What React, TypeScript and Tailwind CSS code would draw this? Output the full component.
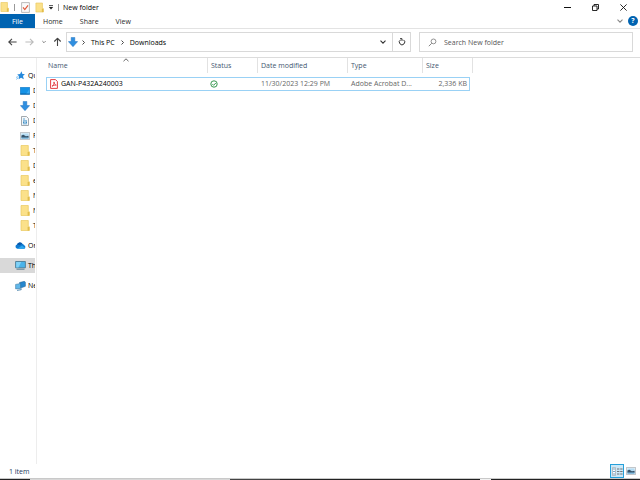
import React from 'react';

type IconProps = { className?: string };

const Folder = ({ className = 'w-[10px] h-[11px]' }: IconProps) => (
    <svg viewBox="0 0 10 11" className={`shrink-0 ${className}`}>
        <path d="M1 .5h7.300v6.200h1v3.800H1z" fill="#fbe18a" stroke="#e9c860" strokeWidth=".7" />
        <path d="M7.600 7h1.800v3.600H7.600z" fill="#e2bd4c" />
    </svg>
);

const DownArrow = () => (
    <svg viewBox="0 0 10 10" className="w-[10px] h-[10px] shrink-0">
        <path d="M3.2.4h3.6v4.2h2.8L5 9.7.4 4.6h2.8z" fill="#2f8fe0" stroke="#1f6fbf" strokeWidth=".5" />
    </svg>
);

const Star = () => (
    <svg viewBox="0 0 9 9" className="w-[9px] h-[9px] shrink-0">
        <path d="M5.400.2l1 2.800 2.500.1-1.900 1.900.8 3.200-2.700-1.500-2.500 1.600.5-3L1.200 3.500l2.900-.4z" fill="#2589dc" />
        <path d="M0 6.400l2.400-.8M.2 8.400l2.200-1.600" stroke="#64b2ee" strokeWidth=".8" />
    </svg>
);

const Desktop = () => (
    <svg viewBox="0 0 10 8" className="w-[10px] h-[8px] shrink-0">
        <path d="M.3.3h9.4v7H.3z" fill="#1592e6" stroke="#0a6fbd" strokeWidth=".6" />
        <path d="M6 7L9.4 2v5z" fill="#38aaf2" />
        <path d="M.3 7h9.4" stroke="#0b5a9b" strokeWidth=".8" />
    </svg>
);

const Document = () => (
    <svg viewBox="0 0 8 10" className="w-[8px] h-[10px] mx-px shrink-0">
        <path d="M.5.5h5l2 2v7h-7z" fill="#f5f8fa" stroke="#8d9499" strokeWidth=".8" />
        <path d="M2 3h2M2 4.8h4M2 7.8h4" stroke="#3e8fc7" strokeWidth=".8" />
        <path d="M2 5.5h1.5v1.6H2zM4.5 5.5H6v1.6H4.5z" fill="#3e8fc7" />
    </svg>
);

const Picture = () => (
    <svg viewBox="0 0 10 8" className="w-[10px] h-[8px] shrink-0">
        <path d="M.4.4h9.2v7.2H.4z" fill="#f2f6f8" stroke="#a3a9ad" strokeWidth=".7" />
        <path d="M1.4 1.4h7.2v5.2H1.4z" fill="#b4dcf4" />
        <path d="M1.4 3.6l2-.8 2.5 1.4 2.7-.4v2H1.4z" fill="#38546a" />
        <path d="M1.4 5.6h7.2v1H1.4z" fill="#5ba2cf" />
    </svg>
);

const Cloud = () => (
    <svg viewBox="0 0 11 7" className="w-[11px] h-[7px] shrink-0">
        <path d="M2.3 6.7A2.1 2.1 0 0 1 2 2.6 3 3 0 0 1 7.3 1.7 2.6 2.6 0 0 1 9 3.2a1.8 1.8 0 0 1 0 3.5z" fill="#0f7ad1" />
        <path d="M2.4 6.7L7 3.6l3.2 2.3a1.6 1.6 0 0 1-1.2.8z" fill="#2da6ee" />
        <path d="M2 2.6A3 3 0 0 1 7.3 1.7L4.6 3.2z" fill="#0a58a8" />
    </svg>
);

const Computer = () => (
    <svg viewBox="0 0 11 9" className="w-[11px] h-[9px] shrink-0">
        <path d="M.6.5h9.8v6.3H.6z" fill="#49b3ea" stroke="#38677f" strokeWidth=".7" />
        <path d="M1.2 1h5L3.4 6.4H1.2z" fill="#80d2f7" />
        <path d="M1.5 8.2h8" stroke="#4a7389" strokeWidth=".9" />
    </svg>
);

const Network = () => (
    <svg viewBox="0 0 11 10" className="w-[11px] h-[10px] shrink-0">
        <path d="M4.500 1.500l5-1.200.9 1v4L5.600 7z" fill="#2687cf" stroke="#1d5c8f" strokeWidth=".5" />
        <path d="M.6 3.400l5-.9v4.900l-5 .5z" fill="#61b8ea" stroke="#2e6c98" strokeWidth=".5" />
        <path d="M2 9.300l4.200-.6V7.500" stroke="#3d7ba6" strokeWidth=".9" fill="none" />
    </svg>
);

const Chevron = ({ className = 'w-[6px]' }: IconProps) => (
    <svg viewBox="0 0 6 4" className={`h-[4px] shrink-0 ${className}`}>
        <path d="M.5.6L3 3.1 5.500.6" fill="none" stroke="currentColor" strokeWidth="1.1" />
    </svg>
);

const Crumb = () => (
    <svg viewBox="0 0 3 5" className="w-[3px] h-[5px] shrink-0">
        <path d="M.5.5l2 2-2 2" fill="none" stroke="#333" strokeWidth=".9" />
    </svg>
);

const Arrow = ({ className = '' }: IconProps) => (
    <svg viewBox="0 0 9 8" className={`w-[9px] h-[8px] shrink-0 ${className}`}>
        <path d="M4 .8L.8 4 4 7.2M.8 4h7.8" fill="none" stroke="currentColor" strokeWidth="1.1" />
    </svg>
);

const quickAccess = [
    { label: 'Desktop', icon: <Desktop /> },
    { label: 'Downloads', icon: <DownArrow /> },
    { label: 'Documents', icon: <Document /> },
    { label: 'Pictures', icon: <Picture /> },
    { label: 'T', icon: <Folder /> },
    { label: 'D', icon: <Folder /> },
    { label: 'e', icon: <Folder /> },
    { label: 'N', icon: <Folder /> },
    { label: 'N', icon: <Folder /> },
    { label: 'T', icon: <Folder /> },
];

const places = [
    { label: 'OneDrive', icon: <Cloud />, active: false },
    { label: 'This PC', icon: <Computer />, active: true },
    { label: 'Network', icon: <Network />, active: false },
];

const TitleBar = () => (
    <header className="flex h-[14px] items-center text-black">
        <Folder className="w-[9px] h-[10px]" />
        <span className="ml-[5px] h-[7px] w-px bg-[#999]" />
        <button aria-label="Properties" className="ml-[6px]">
            <svg viewBox="0 0 9 11" className="w-[9px] h-[11px]">
                <path d="M.6.6h7.8v9.8H.6z" fill="#fafafa" stroke="#a9a9a9" strokeWidth=".8" />
                <path d="M2 5.4l1.8 2.2L7 3.4" fill="none" stroke="#e0593a" strokeWidth="1.2" />
            </svg>
        </button>
        <button aria-label="New folder" className="ml-[5px]"><Folder className="w-[9px] h-[11px]" /></button>
        <button aria-label="Customize toolbar" className="ml-[4px]">
            <svg viewBox="0 0 6 5" className="w-[6px] h-[5px]">
                <path d="M1 .6h4" stroke="#222" strokeWidth=".8" />
                <path d="M.8 2h4.4L3 4.4z" fill="#222" />
            </svg>
        </button>
        <span className="ml-[4px] h-[7px] w-px bg-[#999]" />
        <h1 className="ml-[4px] pt-px">New folder</h1>
        <div className="ml-auto flex items-center gap-[21px] pr-[13px]">
            <button aria-label="Minimize">
                <svg viewBox="0 0 7 7" className="w-[7px] h-[7px]"><path d="M0 3.5h7" stroke="#111" /></svg>
            </button>
            <button aria-label="Restore">
                <svg viewBox="0 0 7 7" className="w-[7px] h-[7px]">
                    <path d="M.5 2h4.5v4.5H.5zM2 2V.5h4.5V5H5" fill="none" stroke="#111" strokeWidth=".9" />
                </svg>
            </button>
            <button aria-label="Close">
                <svg viewBox="0 0 7 7" className="w-[7px] h-[7px]">
                    <path d="M.4.4l6.2 6.2M6.6.4L.4 6.6" stroke="#111" strokeWidth=".9" />
                </svg>
            </button>
        </div>
    </header>
);

const MenuBar = () => (
    <nav className="flex h-[15px] items-center border-b border-[#e3e3e3] text-[#2b2b2b]">
        <button className="h-full w-[35px] bg-[#0063b1] pt-px text-white">File</button>
        <button className="ml-[8px] pt-px">Home</button>
        <button className="ml-[17px] pt-px">Share</button>
        <button className="ml-[17px] pt-px">View</button>
        <button aria-label="Expand ribbon" className="ml-auto text-[#888]"><Chevron /></button>
        <button aria-label="Help" className="ml-[5px] mr-[2px] flex h-[10px] w-[10px] items-center justify-center rounded-full bg-[#0063b1] font-bold text-white">?</button>
    </nav>
);

const AddressBar = () => (
    <div className="flex h-[29px] items-center border-b border-[#dcdcdc] pl-[8px] pr-[7px] pb-[2px]">
        <button aria-label="Back"><Arrow className="text-[#444]" /></button>
        <button aria-label="Forward" className="ml-[8px]"><Arrow className="rotate-180 text-[#bbb]" /></button>
        <button aria-label="Recent locations" className="ml-[8px] text-[#555]"><Chevron className="w-[4px]" /></button>
        <button aria-label="Up" className="ml-[7px] mr-[4px]"><Arrow className="rotate-90 text-[#444]" /></button>
        <div className="flex h-[20px] min-w-0 flex-[342] items-center border border-[#d9d9d9] pl-px">
            <DownArrow />
            <div className="ml-[4px] flex items-center gap-[6px] whitespace-nowrap text-black">
                <Crumb />
                <a href="#this-pc" className="pt-px">This PC</a>
                <Crumb />
                <a href="#downloads" className="pt-px">Downloads</a>
            </div>
            <button aria-label="Previous locations" className="ml-auto mr-[6px] text-[#333]"><Chevron /></button>
            <button aria-label="Refresh" className="flex h-full w-[18px] items-center justify-center border-l border-[#d9d9d9]">
                <svg viewBox="0 0 8 8" className="w-[8px] h-[8px]">
                    <path d="M5.6 1.9A2.7 2.7 0 1 1 2.6 1.8M2 .7h2v2.2" fill="none" stroke="#333" strokeWidth="1" />
                </svg>
            </button>
        </div>
        <label className="ml-[8px] flex h-[20px] min-w-0 flex-[204] items-center border border-[#d9d9d9] pl-[8px]">
            <svg viewBox="0 0 9 9" className="w-[9px] h-[9px] shrink-0">
                <path d="M.8 8.2l2.9-2.9" stroke="#777" strokeWidth=".9" />
                <circle cx="5.5" cy="3.4" r="2.4" fill="none" stroke="#777" strokeWidth=".8" />
            </svg>
            <input type="search" aria-label="Search" placeholder="Search New folder" className="ml-[7px] min-w-0 flex-1 bg-transparent pt-px outline-none placeholder:text-[#555]" />
        </label>
    </div>
);

const Sidebar = () => (
    <aside className="w-[36px] shrink-0 overflow-hidden pt-[10px] text-black">
        <div className="w-[35px] overflow-hidden whitespace-nowrap">
            <div className="flex h-[15px] items-center gap-[3px] pl-[16px]">
                <Star />
                <span>Quick access</span>
            </div>
            <ul>
                {quickAccess.map((item, i) => (
                    <li key={i} className="flex h-[15px] items-center gap-[3px] pl-[20px]">
                        {item.icon}
                        <span>{item.label}</span>
                    </li>
                ))}
            </ul>
            <ul className="mt-[5px] flex flex-col gap-[5px]">
                {places.map((place) => (
                    <li key={place.label} className={`flex h-[15px] items-center gap-[2px] pl-[15px] ${place.active ? 'bg-[#d9d9d9]' : ''}`}>
                        {place.icon}
                        <span>{place.label}</span>
                    </li>
                ))}
            </ul>
        </div>
    </aside>
);

const head = 'h-[15px] border-r border-[#e2e2e2] p-0 pt-px text-left font-normal';
const cell = 'flex h-[14px] items-center border-y border-[#99d1f5] whitespace-nowrap';

const FileTable = () => (
    <main className="min-w-0 flex-1 border-l border-[#ededed] pl-[9px]">
        <table className="w-[427px] table-fixed border-separate border-spacing-0">
            <colgroup>
                <col className="w-[162px]" />
                <col className="w-[50px]" />
                <col className="w-[90px]" />
                <col className="w-[75px]" />
                <col className="w-[50px]" />
            </colgroup>
            <thead className="text-[#43566f]">
                <tr>
                    <th className={head}>
                        <div className="relative pl-[2px]">
                            Name
                            <svg viewBox="0 0 6 4" className="absolute left-[77px] -top-[3px] w-[6px] h-[4px]">
                                <path d="M.5 3.2L3 .8l2.5 2.4" fill="none" stroke="#555" strokeWidth=".9" />
                            </svg>
                        </div>
                    </th>
                    <th className={`${head} pl-[3px]`}>Status</th>
                    <th className={`${head} pl-[3px]`}>Date modified</th>
                    <th className={`${head} pl-[3px]`}>Type</th>
                    <th className={`${head} pl-[3px]`}>Size</th>
                </tr>
            </thead>
            <tbody className="text-[#666]">
                <tr>
                    <td className="p-0 pt-[4px]">
                        <div className={`${cell} gap-[3px] border-l pl-[3px] text-black`}>
                            <svg viewBox="0 0 8 10" className="w-[8px] h-[10px] shrink-0">
                                <path d="M.6.6h4.9l1.9 1.9v6.9H.6z" fill="#fff" stroke="#e0282e" strokeWidth=".9" />
                                <path d="M2 7.3C3.4 6.6 4.2 4.6 4 2.9c.2 2 1.2 3 2.3 3.2C4.7 5.9 3.2 6.2 2 7.3z" fill="none" stroke="#e0282e" strokeWidth=".8" />
                            </svg>
                            GAN-P432A240003
                        </div>
                    </td>
                    <td className="p-0 pt-[4px]">
                        <div className={`${cell} pl-[2px]`}>
                            <svg viewBox="0 0 8 8" role="img" aria-label="Available" className="w-[8px] h-[8px]">
                                <circle cx="4" cy="4" r="3.2" fill="none" stroke="#218c3c" strokeWidth=".9" />
                                <path d="M2.4 4.1l1.2 1.2 2.2-2.3" fill="none" stroke="#218c3c" strokeWidth=".9" />
                            </svg>
                        </div>
                    </td>
                    <td className="p-0 pt-[4px]"><div className={`${cell} pl-[3px]`}>11/30/2023 12:29 PM</div></td>
                    <td className="p-0 pt-[4px]"><div className={`${cell} pl-[3px]`}>Adobe Acrobat D...</div></td>
                    <td className="p-0 pt-[4px] pr-[3px]"><div className={`${cell} justify-end border-r pr-[2px]`}>2,336 KB</div></td>
                </tr>
            </tbody>
        </table>
    </main>
);

const StatusBar = () => (
    <footer>
        <div className="flex h-[14px] items-center pl-[9px] text-[#1e395b]">
            <span className="pt-[2px]">1 item</span>
            <button aria-label="Details view" className="ml-auto flex h-[14px] w-[14px] items-center justify-center border border-[#26a0da] bg-[#cce8f8]">
                <svg viewBox="0 0 11 9" className="w-[11px] h-[9px]">
                    <path d="M.5.6h3v7.8h-3z" fill="#fff" stroke="#999" strokeWidth=".6" />
                    <path d="M1 2h2M1 4.5h2M1 7h2" stroke="#4f93c4" strokeWidth=".8" />
                    <path d="M5 2h2.4M8.2 2h2.4M5 4.5h2.4M8.2 4.5h2.4M5 7h2.4M8.2 7h2.4" stroke="#666" strokeWidth=".9" />
                </svg>
            </button>
            <button aria-label="Thumbnail view" className="ml-[2px] mr-[4px]">
                <Picture />
            </button>
        </div>
        <div className="flex h-[2px] border-t border-[#c9c9c9]">
            <span className="w-[30px] bg-[#222]" />
            <span className="flex-[200] bg-[#d8d8d8]" />
            <span className="w-[50px] bg-[#444]" />
            <span className="flex-[200] bg-[#222]" />
            <span className="w-[11px] bg-[#f2f2f2]" />
            <span className="flex-[149] bg-[#222]" />
        </div>
    </footer>
);

const App: React.FC = () => (
    <div className="flex min-h-screen flex-col bg-white font-['Open_Sans','Noto_Sans',sans-serif] text-[7px] leading-[10px]">
        <TitleBar />
        <MenuBar />
        <AddressBar />
        <div className="flex flex-1">
            <Sidebar />
            <FileTable />
        </div>
        <StatusBar />
    </div>
);

export default App;
